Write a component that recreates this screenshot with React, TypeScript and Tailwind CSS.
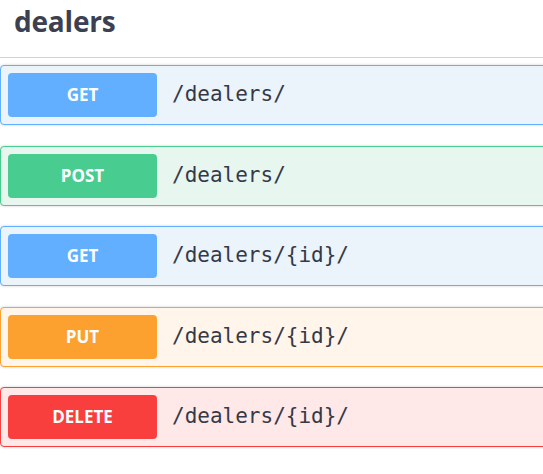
const ops = [
  { method: "GET", path: "/dealers/", badge: "bg-[#61affe]", box: "bg-[#ebf3fb] border-[#61affe]" },
  { method: "POST", path: "/dealers/", badge: "bg-[#49cc90]", box: "bg-[#e8f6f0] border-[#49cc90]" },
  { method: "GET", path: "/dealers/{id}/", badge: "bg-[#61affe]", box: "bg-[#ebf3fb] border-[#61affe]" },
  { method: "PUT", path: "/dealers/{id}/", badge: "bg-[#fca130]", box: "bg-[#fff5ea] border-[#fca130]" },
  { method: "DELETE", path: "/dealers/{id}/", badge: "bg-[#f93e3e]", box: "bg-[#fee8e8] border-[#f93e3e]" },
]

export default function App() {
  return (
    <div className="w-[543px] h-[474px] overflow-hidden bg-white text-[#3b4151]">
      {/* Tag header */}
      <div className="h-[58px] border-b border-[#d2d3d6] pl-[14px] pt-[1px]">
        <h3 className="text-[28px] leading-[40px] font-bold font-['Open_Sans',sans-serif] tracking-[-0.2px]">
          dealers
        </h3>
      </div>

      {/* Operations */}
      <div className="flex flex-col gap-[20.5px] pt-[7px]">
        {ops.map((op, i) => (
          <div
            key={i}
            className={`w-[560px] h-[60px] border rounded-[4px] shadow-[0_0_3px_rgba(0,0,0,0.19)] flex items-center px-[7px] ${op.box}`}
          >
            <span
              className={`w-[149px] h-[44px] rounded-[4px] flex items-center justify-center text-white text-[17px] font-bold font-['Open_Sans',sans-serif] ${op.badge}`}
            >
              {op.method}
            </span>
            <span className="ml-[15px] text-[21px] font-['DejaVu_Sans_Mono',monospace] text-[#343948]">
              {op.path}
            </span>
          </div>
        ))}
      </div>
    </div>
  )
}
